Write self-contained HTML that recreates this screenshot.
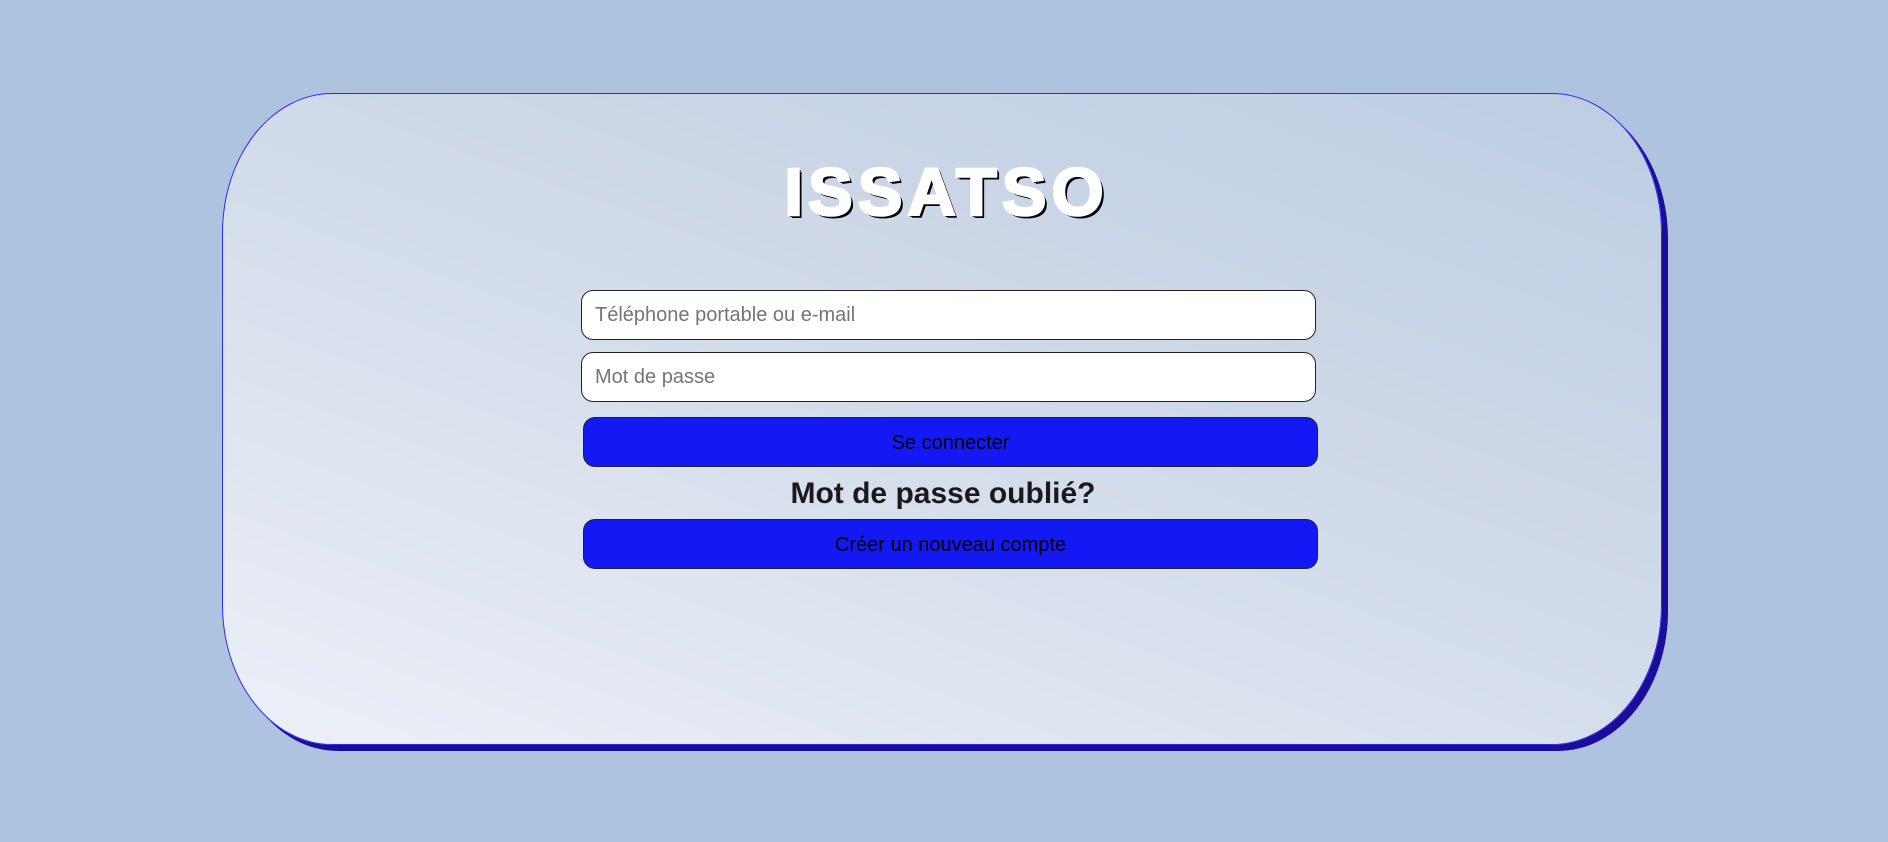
<!DOCTYPE html>
<html><head><style>
html,body{margin:0;padding:0;width:1888px;height:842px;background:#aec3e0;overflow:hidden;font-family:"Liberation Sans",Arial,sans-serif}
.card{position:absolute;left:222px;top:93px;width:1440px;height:652px;border:1px solid #2b2bf0;border-radius:110px/140px;box-sizing:border-box;background:linear-gradient(200deg,#bccde2 0%,#d3dcea 50%,#edf0f8 100%);box-shadow:6px 6px 0 #1c0c9a}
h1{position:absolute;left:0;width:1888px;top:158px;margin:0;text-align:center;font-size:67px;font-weight:bold;color:#fff;letter-spacing:5px;text-indent:5px;-webkit-text-stroke:2.5px #fff;text-shadow:2px 2px 0 #000,1px 2px 0 #000,2px 1px 0 #000,3px 3px 0 #000;line-height:70px}
.in{position:absolute;left:581px;width:735px;height:50px;box-sizing:border-box;border:1px solid #222;border-radius:12px;background:#fff;color:#757575;font-size:20px;line-height:48px;padding-left:13px}
.btn{position:absolute;left:583px;width:735px;height:50px;box-sizing:border-box;border:1px solid #222;border-radius:12px;background:#1319f5;color:#000;font-size:20px;line-height:50px;text-align:center}
.f{position:absolute;left:0;width:1886px;top:477px;text-align:center;font-size:30px;font-weight:bold;color:#1a1a1a}
</style></head><body>
<div class="card"></div>
<h1>ISSATSO</h1>
<div class="in" style="top:290px">Téléphone portable ou e-mail</div>
<div class="in" style="top:352px">Mot de passe</div>
<div class="btn" style="top:417px">Se connecter</div>
<div class="f">Mot de passe oublié?</div>
<div class="btn" style="top:519px">Créer un nouveau compte</div>
</body></html>
